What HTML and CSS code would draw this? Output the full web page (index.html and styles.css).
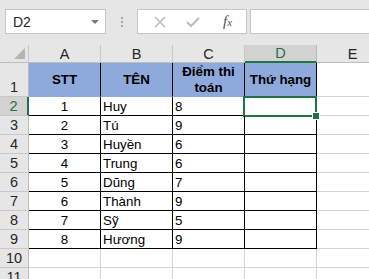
FILE: index.html
```html
<!DOCTYPE html>
<html lang="vi">
<head>
  <meta charset="UTF-8" />
  <title>Bảng điểm</title>
  <link rel="stylesheet" href="styles.css">
</head>
<body>
  <div class="toolbar">
    <div class="namebox">
      <span>D2</span>
      <span class="arrow"></span>
    </div>
    <div class="grip"><i></i><i></i><i></i></div>
    <div class="fbuttons">
      <svg class="ico" width="14" height="14" viewBox="0 0 14 14"><path d="M2 2 L12 12 M12 2 L2 12" stroke="#bdbdbd" stroke-width="1.6" fill="none"/></svg>
      <svg class="ico" width="16" height="14" viewBox="0 0 16 14"><path d="M2 7 L6 11 L14 3" stroke="#bdbdbd" stroke-width="2" fill="none"/></svg>
      <span class="fx">f<small>x</small></span>
    </div>
    <div class="formula"></div>
  </div>

  <div class="sheet" id="sheet"></div>

  <script>
    const rows = [
      ['1', 'Huy', '8'],
      ['2', 'Tú', '9'],
      ['3', 'Huyền', '6'],
      ['4', 'Trung', '6'],
      ['5', 'Dũng', '7'],
      ['6', 'Thành', '9'],
      ['7', 'Sỹ', '5'],
      ['8', 'Hương', '9']
    ];
    const sheet = document.getElementById('sheet');

    function cell(cls, text) {
      const d = document.createElement('div');
      d.className = 'cell ' + cls;
      d.innerHTML = text || '';
      sheet.appendChild(d);
      return d;
    }

    // column headers
    cell('corner', '<span class="tri"></span>');
    ['A', 'B', 'C', 'D', 'E'].forEach(c => cell('colhead' + (c === 'D' ? ' sel' : ''), c));

    // header row
    cell('rowhead tall', '1');
    cell('th', 'STT');
    cell('th', 'TÊN');
    cell('th', 'Điểm thi<br>toán');
    cell('th', 'Thứ hạng');
    cell('', '');

    rows.forEach((r, i) => {
      cell('rowhead' + (i === 0 ? ' sel' : ''), i + 2);
      cell('td center', r[0]);
      cell('td', r[1]);
      cell('td', r[2]);
      cell('td' + (i === 0 ? ' active' : ''), '');
      cell('', '');
    });

    [10, 11].forEach(n => {
      cell('rowhead', n);
      for (let k = 0; k < 5; k++) cell('', '');
    });
  </script>
</body>
</html>
```

FILE: styles.css
```css
body {
  margin: 0;
  font-family: 'Liberation Sans', Arial, sans-serif;
  background: #fff;
  width: 369px;
  height: 279px;
  overflow: hidden;
}
.toolbar {
  background: #e6e6e6;
  height: 45px;
  display: flex;
  align-items: flex-start;
  padding-top: 9px;
  box-sizing: border-box;
}
.namebox {
  margin-left: 5px;
  width: 101px;
  height: 25px;
  box-sizing: border-box;
  background: #fff;
  border: 1px solid #c6c6c6;
  display: flex;
  align-items: center;
  justify-content: space-between;
  padding: 0 6px 0 7px;
  font-size: 14px;
  color: #262626;
}
.arrow {
  width: 0;
  height: 0;
  border-left: 4px solid transparent;
  border-right: 4px solid transparent;
  border-top: 4px solid #7a7a7a;
}
.grip {
  width: 31px;
  height: 25px;
  display: flex;
  flex-direction: column;
  align-items: center;
  justify-content: center;
  gap: 2px;
}
.grip i {
  width: 2px;
  height: 2px;
  background: #a6a6a6;
}
.fbuttons {
  width: 110px;
  height: 25px;
  box-sizing: border-box;
  background: #fff;
  border: 1px solid #c6c6c6;
  display: flex;
  align-items: center;
  padding-left: 15px;
}
.ico {
  margin-right: 18px;
}
.fbuttons .ico + .ico {
  margin-right: 22px;
}
.fx {
  font-family: 'Liberation Serif', serif;
  font-style: italic;
  font-size: 15px;
  color: #555;
}
.fx small {
  font-size: 11px;
}
.formula {
  margin-left: 3px;
  flex: 1;
  height: 25px;
  box-sizing: border-box;
  background: #fff;
  border: 1px solid #c6c6c6;
  border-right: none;
}
.sheet {
  display: grid;
  grid-template-columns: 29px repeat(5, 72px);
  grid-template-rows: 18px 34px repeat(10, 19px);
  font-size: 13.33px;
  color: #000;
}
.cell {
  box-sizing: border-box;
  border-right: 1px solid #d4d4d4;
  border-bottom: 1px solid #d4d4d4;
  display: flex;
  align-items: flex-end;
  padding: 0 2px 1px;
  white-space: nowrap;
  position: relative;
}
.corner {
  background: #e6e6e6;
  border-right-color: #c8c8c8;
  border-bottom-color: #bdbdbd;
}
.tri {
  position: absolute;
  right: 3px;
  bottom: 3px;
  width: 0;
  height: 0;
  border-left: 11px solid transparent;
  border-bottom: 11px solid #b4b4b4;
}
.colhead {
  background: #e6e6e6;
  border-right-color: #c8c8c8;
  border-bottom-color: #bdbdbd;
  justify-content: center;
  align-items: center;
  font-size: 14.5px;
  color: #262626;
  padding: 0;
}
.colhead.sel {
  background: #d2d2d2;
  color: #217346;
  border-bottom: 2px solid #217346;
  border-right-color: #b8b8b8;
}
.rowhead {
  background: #e6e6e6;
  border-right-color: #bdbdbd;
  border-bottom-color: #c8c8c8;
  justify-content: center;
  font-size: 14.5px;
  color: #262626;
  padding: 0 0 1px;
  align-items: center;
}
.rowhead.tall {
  align-items: flex-end;
  padding-bottom: 1px;
}
.rowhead.sel {
  background: #d2d2d2;
  color: #217346;
  border-right: 2px solid #217346;
}
.th {
  background: #8ea9db;
  border-right-color: #000;
  border-bottom-color: #8ea9db;
  justify-content: center;
  align-items: center;
  text-align: center;
  font-weight: bold;
  line-height: 16px;
  white-space: normal;
  padding-bottom: 0;
}
.td {
  border-right-color: #000;
  border-bottom-color: #000;
}
.center {
  justify-content: center;
}
.active::after {
  content: '';
  position: absolute;
  left: -2px;
  top: -1px;
  right: -1px;
  bottom: -2px;
  border: 2px solid #217346;
}
.active::before {
  content: '';
  position: absolute;
  right: -4px;
  bottom: -5px;
  width: 6px;
  height: 6px;
  background: #217346;
  border: 1px solid #fff;
  z-index: 2;
}
```
